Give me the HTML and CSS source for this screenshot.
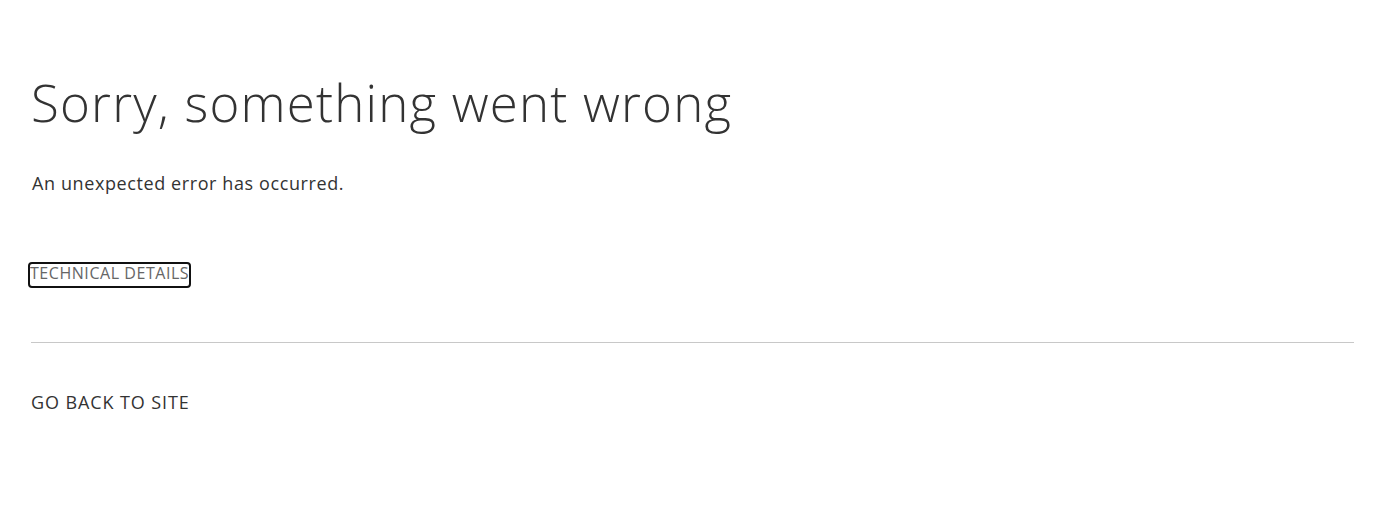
FILE: index.html
```html
<!DOCTYPE html>
<html>
<head>
<meta charset="utf-8">
<link rel="stylesheet" href="styles.css">
</head>
<body>
<div class="page">
  <h1 class="title">Sorry, something went wrong</h1>
  <p class="message">An unexpected error has occurred.</p>
  <div class="details-row">
    <a class="details" href="#">TECHNICAL DETAILS</a>
  </div>
  <hr class="rule">
  <a class="back" href="#">GO BACK TO SITE</a>
</div>
</body>
</html>
```
FILE: styles.css
```css
html, body {
  margin: 0;
  padding: 0;
  background: #ffffff;
}
body {
  font-family: "Open Sans", "Noto Sans", sans-serif;
  color: #333333;
}
.page {
  padding: 72px 24px 0 31px;
  display: flex;
  flex-direction: column;
  align-items: flex-start;
}
.title {
  margin: 0;
  font-weight: 300;
  font-size: 51px;
  line-height: 60px;
  color: #333333;
  letter-spacing: 1.2px;
}
.message {
  margin: 39px 0 0 1px;
  font-size: 18px;
  line-height: 24px;
  color: #333333;
  letter-spacing: 0.6px;
}
.details-row {
  display: flex;
  margin-top: 67px;
}
.details {
  display: block;
  margin-left: -3px;
  padding: 0 0 4px 0;
  border: 2px solid #111;
  border-radius: 4px;
  font-size: 16px;
  line-height: 18px;
  color: #666666;
  text-decoration: none;
  letter-spacing: 0.55px;
}
.rule {
  align-self: stretch;
  margin: 54px 0 0 0;
  border: 0;
  border-top: 1px solid #c8c8c8;
  height: 0;
}
.back {
  margin-top: 47px;
  font-size: 18px;
  line-height: 24px;
  color: #333333;
  text-decoration: none;
  letter-spacing: 0.9px;
}
```
